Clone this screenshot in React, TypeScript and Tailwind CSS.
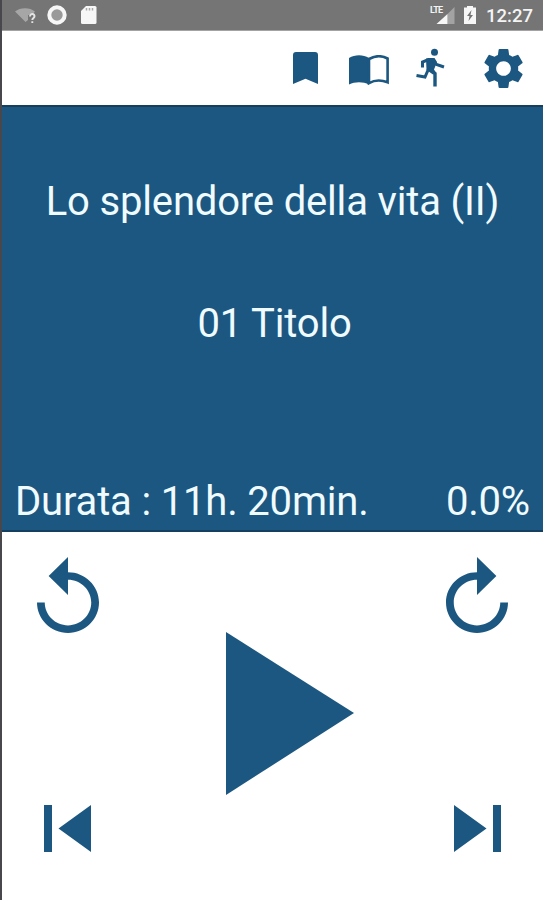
import type { ReactNode } from "react";
import { MdSettings } from "react-icons/md";

function StatusBar() {
  return (
    <div className="h-[31px] shrink-0 flex items-center bg-[#757575] border-b border-[#a3a3a3] text-[#f4f4f4] pl-[13px] pr-[10px]">
      {/* wifi with no connection */}
      <svg className="w-[22px] h-[18px]" viewBox="0 0 22 18">
        <path d="M0 5.5C5 1 15 1 20 5.5L17 9h-4v5l-2.500 2z" fill="#a6a6a6" />
        <path d="M15 10.500c0-3.500 5-3 4.500 0-.2 1.500-2.200 1.500-2.200 3.500M17.300 15.200v1.800" fill="none" stroke="#e4e4e4" strokeWidth="1.900" />
      </svg>
      <svg className="ml-[10px] w-[20px] h-[20px]" viewBox="0 0 20 20">
        <circle cx="10" cy="10" r="7.700" fill="#999" stroke="#f7f7f7" strokeWidth="4" />
      </svg>
      <svg className="ml-[13px] w-[17px] h-[20px]" viewBox="0 0 17 20">
        <path d="M6 1h9a1.500 1.500 0 0 1 1.500 1.500v15A1.500 1.500 0 0 1 15 19H2.500A1.500 1.500 0 0 1 1 17.500V6z" fill="#f7f7f7" />
        <path d="M6.500 3v2.500M9.500 3v2.500M12.500 3v2.500" stroke="#aaa" strokeWidth="1.500" />
      </svg>

      <div className="ml-auto flex items-center">
        <div className="relative w-[25px] h-[20px]">
          <span className="absolute -left-[1px] top-0 font-bold text-[9px] leading-[10px] tracking-[-0.8px]">LTE</span>
          <svg className="w-full h-full" viewBox="0 0 25 20">
            <path d="M23.500 2v17H16.500V9z" fill="#a3a3a3" />
            <path d="M16.500 9v10H5.500z" fill="#f7f7f7" />
          </svg>
        </div>
        <svg className="ml-[7px] mr-[2px] w-[14px] h-[20px]" viewBox="0 0 14 20">
          <path d="M4 1h6v1.500h3V19H1V2.500h3z" fill="#f7f7f7" />
          <path d="M8.500 5 4 11h2.500L5.500 16l4.500-6H7.500z" fill="#757575" />
        </svg>
        <span className="ml-[7px] pt-[2px] text-[18.500px] leading-[22px] font-medium">12:27</span>
      </div>
    </div>
  );
}

function Runner() {
  return (
    <svg className="ml-[26px] mt-[-1px] w-[30px] h-[40px]" viewBox="0 0 30 40">
      <circle cx="19.500" cy="4.200" r="3.500" fill="currentColor" />
      <path d="M11 10.500l8.500-.5 2.500 4-3 7.500 2 4-3 1-6.500-4.500z" fill="currentColor" />
      <g fill="none" stroke="currentColor" strokeWidth="3">
        <path d="M7.500 19.500v-5.500l6-2.500h4l4 5 7.500 2.500" />
        <path d="M14 20l6 5.500v13" strokeWidth="3.400" />
        <path d="M13.500 21l-3.500 8-8.500-1.500" />
      </g>
    </svg>
  );
}

function Toolbar() {
  return (
    <div className="h-[76px] shrink-0 flex items-center bg-white border-b-2 border-[#173f5c] pl-[291px]">
      <svg className="w-[25px] h-[32px]" viewBox="0 0 25 32" fill="currentColor">
        <path d="M3 0h19a3 3 0 0 1 3 3v29l-12.500-5.300L0 32V3a3 3 0 0 1 3-3z" />
      </svg>
      <svg className="ml-[31px] mt-[3px] w-[40px] h-[30px]" viewBox="0 0 40 30">
        <path d="M0 3C6-.7 14-.7 20 3v26.500c-6-3-14-3-20 0z" fill="currentColor" />
        <path d="M20 4c6-3.400 13-3.400 18.600-.5v23.800c-6-2.300-13-2.300-18.600.8z" fill="none" stroke="currentColor" strokeWidth="2.600" />
      </svg>
      <Runner />
      <MdSettings className="ml-[34px] w-[49px] h-[49px]" />
    </div>
  );
}

function NowPlaying() {
  return (
    <div className="h-[425px] shrink-0 flex flex-col items-center bg-[#1b5780] border-b-2 border-[#143f60] text-[#f0fbff] text-[40px] leading-[48px] tracking-[-0.17px] whitespace-nowrap">
      <h1 className="mt-[71px]">Lo splendore della vita (II)</h1>
      <h2 className="mt-[74px] pl-[4px]">01 Titolo</h2>
      <div className="mt-auto mb-[4px] w-full flex justify-between pl-[13px] pr-[13px]">
        <span>Durata : 11h. 20min.</span>
        <span>0.0%</span>
      </div>
    </div>
  );
}

function ControlButton({ label, children }: { label: string; children: ReactNode }) {
  return (
    <button type="button" aria-label={label} className="block">
      {children}
    </button>
  );
}

const REPLAY_PATH = "M12 5V1L7 6l5 5V7c3.310 0 6 2.690 6 6s-2.690 6-6 6-6-2.690-6-6H4c0 4.420 3.580 8 8 8s8-3.580 8-8-3.580-8-8-8z";

function Controls() {
  return (
    <div className="flex-1 flex flex-col bg-white pt-[25px]">
      <div className="flex justify-between pl-[34.500px] pr-[35px]">
        <ControlButton label="Indietro">
          <svg className="w-[62px] h-[76px]" viewBox="4 1 16 20" preserveAspectRatio="none" fill="currentColor">
            <path d={REPLAY_PATH} />
          </svg>
        </ControlButton>
        <ControlButton label="Avanti">
          <svg className="w-[62px] h-[76px] -scale-x-100" viewBox="4 1 16 20" preserveAspectRatio="none" fill="currentColor">
            <path d={REPLAY_PATH} />
          </svg>
        </ControlButton>
      </div>
      <div className="flex pl-[224px] mt-[-1px]">
        <ControlButton label="Riproduci">
          <svg className="w-[128px] h-[163px]" viewBox="0 0 128 163" fill="currentColor">
            <path d="M0 0v163l128-82z" />
          </svg>
        </ControlButton>
      </div>
      <div className="flex justify-between mt-[10px] pl-[42px] pr-[42px]">
        <ControlButton label="Precedente">
          <svg className="w-[47px] h-[47px]" viewBox="0 0 47 47" fill="currentColor">
            <path d="M0 0h8v47H0zM47 0v47L14.500 23.500z" />
          </svg>
        </ControlButton>
        <ControlButton label="Successivo">
          <svg className="w-[47px] h-[47px]" viewBox="0 0 47 47" fill="currentColor">
            <path d="M39 0h8v47h-8zM0 0v47l32.500-23.500z" />
          </svg>
        </ControlButton>
      </div>
    </div>
  );
}

export default function App() {
  return (
    <div className="w-full h-[900px] overflow-hidden flex flex-col border-l-2 border-[#47474c] text-[#1b5780] font-['Roboto',sans-serif]">
      <StatusBar />
      <Toolbar />
      <NowPlaying />
      <Controls />
    </div>
  );
}
